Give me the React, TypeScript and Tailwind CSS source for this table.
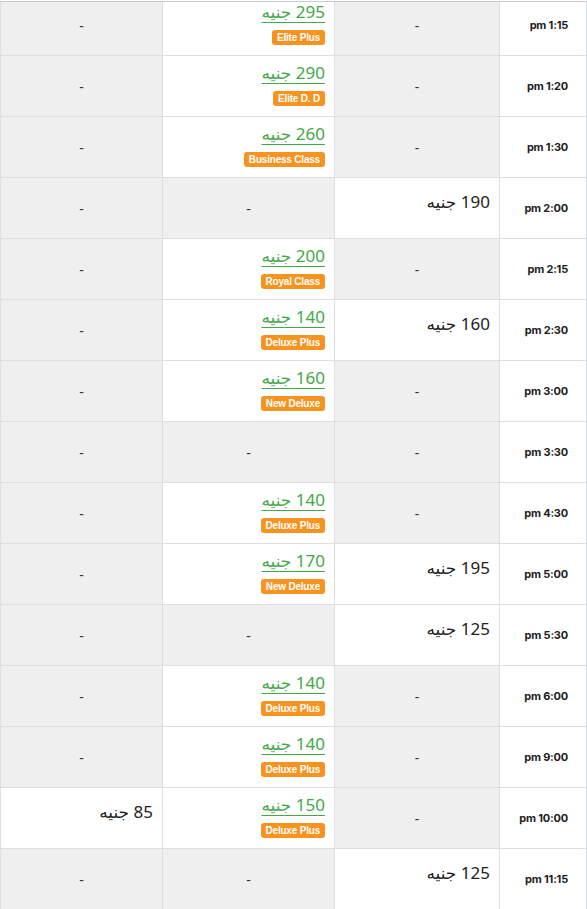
type Fare = { price: number; badge?: string } | null

type Row = { time: string; a: Fare; b: Fare; c: Fare }

const rows: Row[] = [
  { time: "1:15 pm", a: null, b: { price: 295, badge: "Elite Plus" }, c: null },
  { time: "1:20 pm", a: null, b: { price: 290, badge: "Elite D. D" }, c: null },
  { time: "1:30 pm", a: null, b: { price: 260, badge: "Business Class" }, c: null },
  { time: "2:00 pm", a: { price: 190 }, b: null, c: null },
  { time: "2:15 pm", a: null, b: { price: 200, badge: "Royal Class" }, c: null },
  { time: "2:30 pm", a: { price: 160 }, b: { price: 140, badge: "Deluxe Plus" }, c: null },
  { time: "3:00 pm", a: null, b: { price: 160, badge: "New Deluxe" }, c: null },
  { time: "3:30 pm", a: null, b: null, c: null },
  { time: "4:30 pm", a: null, b: { price: 140, badge: "Deluxe Plus" }, c: null },
  { time: "5:00 pm", a: { price: 195 }, b: { price: 170, badge: "New Deluxe" }, c: null },
  { time: "5:30 pm", a: { price: 125 }, b: null, c: null },
  { time: "6:00 pm", a: null, b: { price: 140, badge: "Deluxe Plus" }, c: null },
  { time: "9:00 pm", a: null, b: { price: 140, badge: "Deluxe Plus" }, c: null },
  { time: "10:00 pm", a: null, b: { price: 150, badge: "Deluxe Plus" }, c: { price: 85 } },
  { time: "11:15 pm", a: { price: 125 }, b: null, c: null },
]

function FareCell({ fare }: { fare: Fare }) {
  if (!fare) {
    return (
      <td className="h-[61px] border border-[#dcdfe3] bg-[#efefef] p-0 text-center align-middle text-[14px] text-[#333]">
        -
      </td>
    )
  }

  if (fare.badge) {
    return (
      <td className="h-[61px] border border-[#dcdfe3] bg-white p-0 pr-[9px] pt-[5px] align-top">
        <div className="flex flex-col items-start gap-[6px]">
          <a className="text-[17px] leading-[24px] text-[#43a847] underline underline-offset-[4px] decoration-[1px]">
            {fare.price} جنيه
          </a>
          <span
            dir="ltr"
            className="h-[15px] rounded-[3px] bg-[#f7931e] px-[5px] text-[10px] font-bold leading-[15px] tracking-[-0.2px] text-white"
            style={{ fontFamily: '"Liberation Sans", Arial, sans-serif' }}
          >
            {fare.badge}
          </span>
        </div>
      </td>
    )
  }

  return (
    <td className="h-[61px] border border-[#dcdfe3] bg-white p-0 pr-[9px] pt-[12px] align-top text-[17px] leading-[24px] text-[#222]">
      {fare.price} جنيه
    </td>
  )
}

export default function App() {
  return (
    <div
      dir="rtl"
      className="w-[587px] bg-white pt-[1px]"
      style={{ fontFamily: '"Noto Sans", "DejaVu Sans", sans-serif' }}
    >
      <div className="overflow-hidden border-t border-[#c9cbce]">
        <table className="-mt-[8px] w-[586px] table-fixed border-collapse">
          <colgroup>
            <col className="w-[87px]" />
            <col className="w-[165px]" />
            <col className="w-[172px]" />
            <col className="w-[162px]" />
          </colgroup>
          <tbody>
            {rows.map((r) => (
              <tr key={r.time}>
                <td
                  className="h-[61px] border border-[#dcdfe3] bg-white p-0 pr-[18px] align-middle text-[11px] font-bold tracking-[-0.2px] text-[#1d1d1d]"
                  style={{ fontFamily: 'Inter, "Noto Sans", sans-serif' }}
                >
                  {r.time}
                </td>
                <FareCell fare={r.a} />
                <FareCell fare={r.b} />
                <FareCell fare={r.c} />
              </tr>
            ))}
          </tbody>
        </table>
      </div>
    </div>
  )
}
